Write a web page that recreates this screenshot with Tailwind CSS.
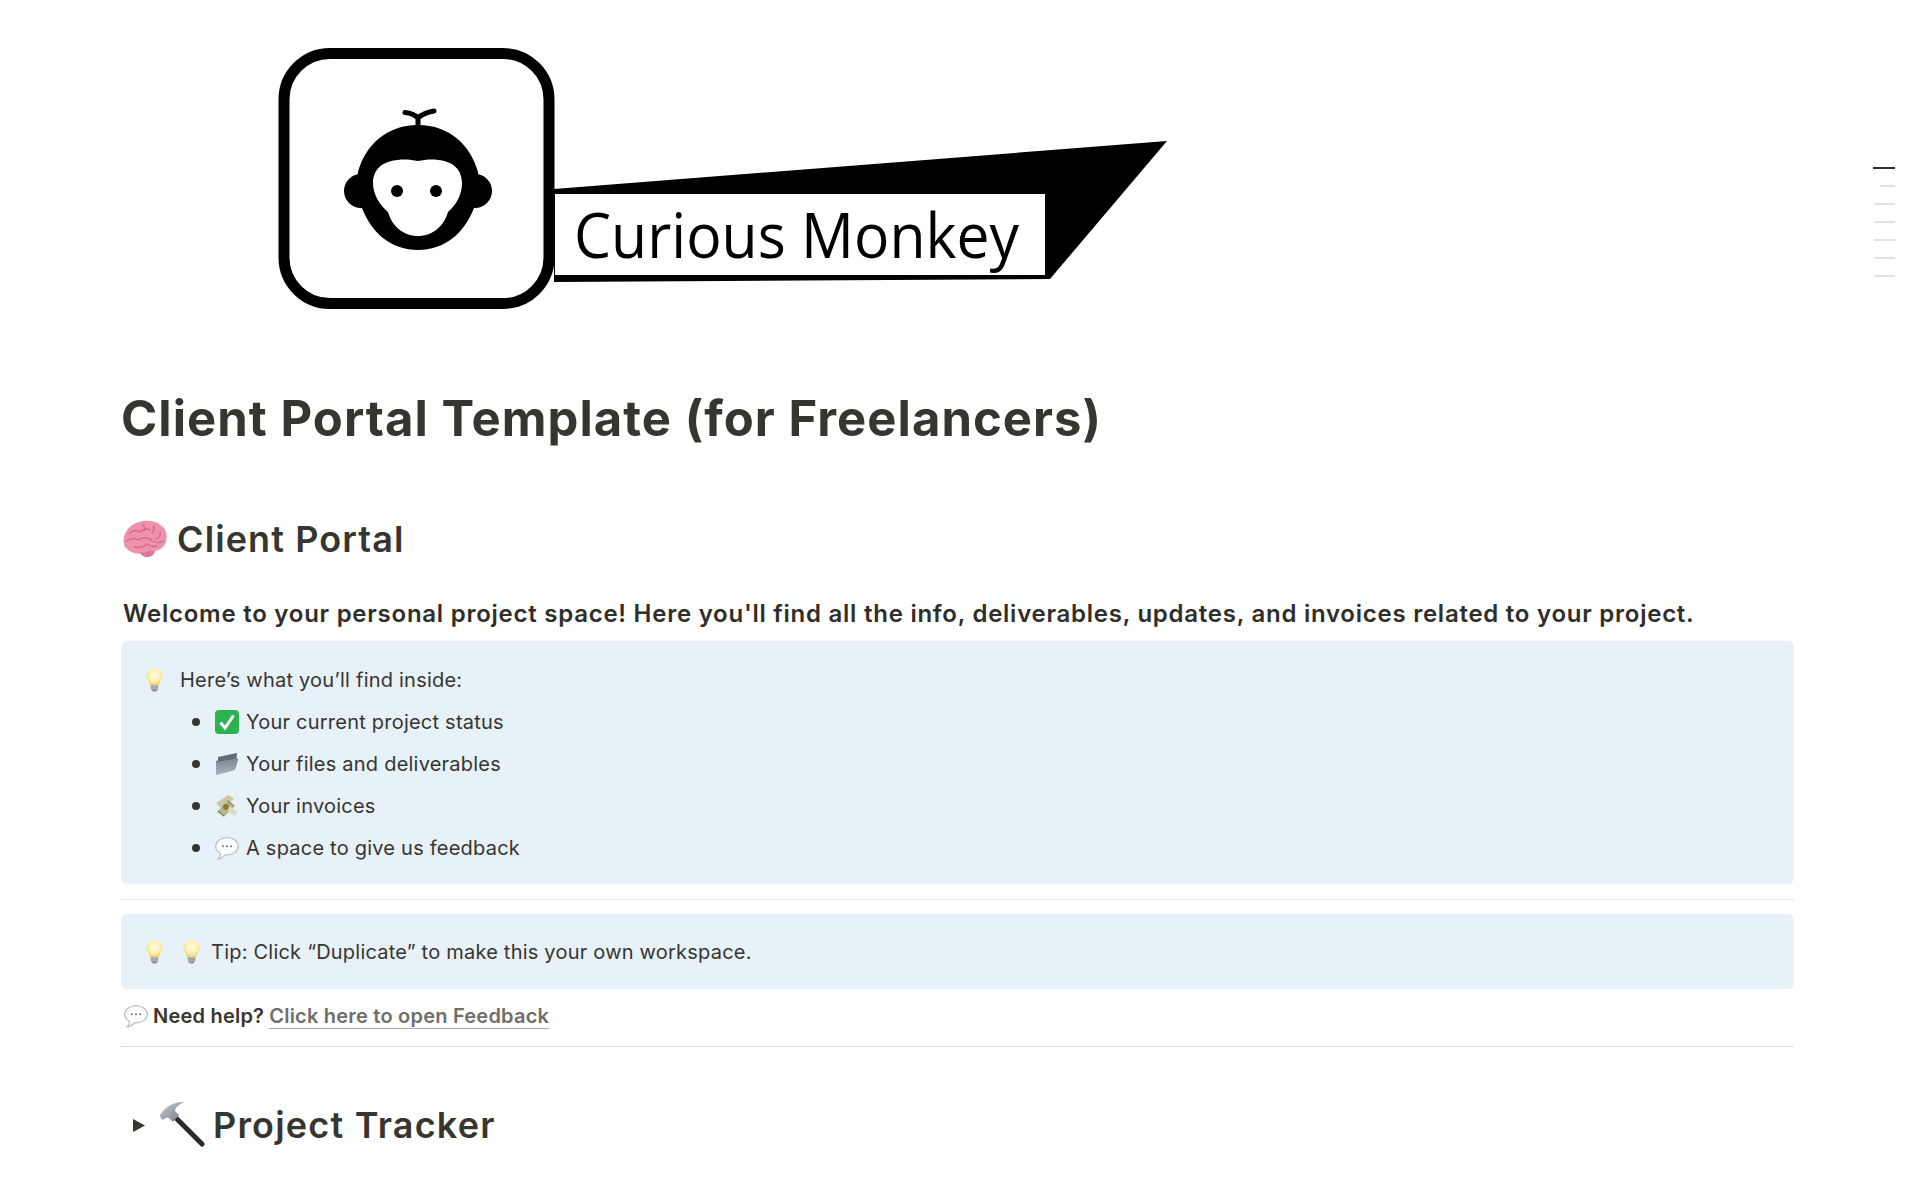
<!DOCTYPE html>
<html lang="en">

<head>
    <meta charset="UTF-8">
    <meta name="viewport" content="width=device-width, initial-scale=1.0">
    <title>Client Portal Template (for Freelancers)</title>
    <script src="https://cdn.jsdelivr.net/npm/@tailwindcss/browser@4"></script>
</head>

<body class="relative h-[1199px] overflow-hidden bg-white font-[Inter,sans-serif] text-[#37352f]">
    <!-- shared emoji drawings -->
    <svg class="absolute w-0 h-0" aria-hidden="true">
        <defs>
            <radialGradient id="bulbglow" cx="50%" cy="38%" r="60%">
                <stop offset="0%" stop-color="#fffde8" />
                <stop offset="65%" stop-color="#fbf0a4" />
                <stop offset="100%" stop-color="#e9cf6c" />
            </radialGradient>
            <linearGradient id="steel" x1="0" y1="0" x2="1" y2="1">
                <stop offset="0%" stop-color="#c9ced6" />
                <stop offset="100%" stop-color="#6f7680" />
            </linearGradient>
            <linearGradient id="foldergrad" x1="0" y1="0" x2="0" y2="1">
                <stop offset="0%" stop-color="#7d8894" />
                <stop offset="100%" stop-color="#a9b3bd" />
            </linearGradient>
            <symbol id="bulb" viewBox="0 0 17 24">
                <path d="M8.5 0.5C3.8 0.5 0.5 3.9 0.5 8c0 3.6 3 5.8 3.6 9.5h8.8c.6-3.7 3.6-5.9 3.6-9.5 0-4.1-3.3-7.500-8-7.500z" fill="url(#bulbglow)" />
                <path d="M4.600 17.500h7.800l-.4 3.500-1.800 2.500H6.800L5 21z" fill="#8b8d90" />
                <path d="M5 19.300l7-.5M5.300 21l6.400-.5" stroke="#cfd2d5" stroke-width=".7" />
            </symbol>
            <symbol id="bubble" viewBox="0 0 24 23">
                <path d="M12 .7C5.700.7.700 4.400.700 9.200c0 3 1.900 5.500 4.800 7-.2 2-1 3.900-2.300 5.600 2.900-.4 5.300-1.600 7-4 .6.100 1.200.100 1.800.100 6.300 0 11.300-3.900 11.300-8.700S18.300.7 12 .7z" fill="#fbfcfd" stroke="#b9bec4" stroke-width="1.200" />
                <circle cx="8" cy="9.300" r="1" fill="#6d7176" />
                <circle cx="12" cy="9.300" r="1" fill="#6d7176" />
                <circle cx="16" cy="9.300" r="1" fill="#6d7176" />
            </symbol>
        </defs>
    </svg>

    <main class="pl-[121px] pr-[126px]">
        <!-- logo -->
        <svg class="block ml-[157px] pt-[42px] box-content w-[900px] h-[275px]" viewBox="278 40 900 275" xmlns="http://www.w3.org/2000/svg">
            <path d="M554 187L1167 139L1050 277L554 280Z" fill="#000" />
            <rect x="555" y="192" width="490" height="81" fill="#fff" />
            <rect x="284" y="51.500" width="265" height="250" rx="46" ry="46" fill="#fff" stroke="#000" stroke-width="11" />
            <text x="574" y="256" font-family="Open Sans" font-weight="500" font-size="62" textLength="445" lengthAdjust="spacingAndGlyphs" fill="#000">Curious Monkey</text>
            <g transform="translate(0 -2)">
                <path d="M418 126V118M418 118C414 114 410 113 405 112.500M418 118C422 114 428 112 434 111" fill="none" stroke="#000" stroke-width="5" stroke-linecap="round" />
                <circle cx="361" cy="191" r="17" fill="#000" />
                <circle cx="475" cy="191" r="17" fill="#000" />
                <path d="M418 125C386 125 365 146 358 172C356 185 358 198 362 208C372 234 392 250 418 250C444 250 464 234 474 208C478 198 480 185 478 172C471 146 450 125 418 125Z" fill="#000" />
                <path d="M418 161C412 160 405 159 398 160C382 161 373 170 373 183C373 195 380 205 388 212C392 226 403 236 418 236C433 236 444 226 448 212C456 205 462 195 462 183C462 170 453 161 438 160C431 159 424 160 418 161Z" fill="#fff" />
                <circle cx="397" cy="191" r="6" fill="#000" />
                <circle cx="436" cy="191" r="6" fill="#000" />
            </g>
        </svg>

        <h1 class="mt-[65px] h-[72px] flex items-center text-[49px] font-bold leading-none tracking-[1.05px] whitespace-nowrap">Client Portal Template (for Freelancers)</h1>

        <h2 class="mt-[60px] h-[50px] flex items-center gap-[10px] pl-[2px] text-[36px] font-semibold leading-none tracking-[1.1px]">
            <svg class="w-[44px] h-[38px]" viewBox="0 0 44 38">
                <path d="M25 37c-3 .6-6-1-7-3.500-5 .5-9-.5-12-3C2 28 0 24 .5 20 1 15 3 10 8 6c5-4 12-6 19-5 8 1 14 5 16 11 1.500 5 .5 11-3 15-2 2-5 3.500-8 4-1 3-3 5.500-7 6z" fill="#ee93ad" />
                <path d="M4 21c4-3 9-3 12-1 3-3 9-3 12 0M7 13c3-3 7-3 10-1 2-3 7-4 10-2M20 5c2 2 2 4 1 6M31 6c1 3 0 5-2 7M37 12c1 3-1 6-4 7M28 20c3 3 8 3 12 1M11 27c5 1 10 0 13-3 3 2 7 3 10 2M18 33c3 1 7 0 9-2" fill="none" stroke="#d9678c" stroke-width="1.400" stroke-linecap="round" />
                <path d="M25 37c-3 .6-6-1-7-3.500 3 .5 8 0 11-2.500l3 .5c-1 3-3 5-7 5.500z" fill="#d9789a" />
            </svg>
            Client Portal
        </h2>

        <p class="mt-[35px] h-[30px] flex items-center pl-[2px] text-[24px] font-semibold leading-none tracking-[0.75px] whitespace-nowrap text-[#2f2e2a]">Welcome to your personal project space! Here you'll find all the info, deliverables, updates, and invoices related to your project.</p>

        <section class="mt-[12px] h-[243px] rounded-md bg-[#e7f1f8] pl-[25px] pt-[26px] text-[20px] leading-[26px] tracking-[0.22px]">
            <div class="flex items-center h-[26px]">
                <svg class="w-[17px] h-[24px]"><use href="#bulb" /></svg>
                <span class="ml-[17px]">Here’s what you’ll find inside:</span>
            </div>
            <ul class="mt-[15.500px] ml-[46px] flex flex-col gap-[16.300px]">
                <li class="flex items-center h-[26px]">
                    <span class="w-[8px] h-[8px] rounded-full bg-[#37352f]"></span>
                    <svg class="ml-[15px] w-[24px] h-[24px]" viewBox="0 0 24 24">
                        <rect width="24" height="24" rx="4" fill="#2cb34f" />
                        <path d="M5.500 12.500l4.500 5.500 8.500-12.500" fill="none" stroke="#fff" stroke-width="3" />
                    </svg>
                    <span class="ml-[7px]">Your current project status</span>
                </li>
                <li class="flex items-center h-[26px]">
                    <span class="w-[8px] h-[8px] rounded-full bg-[#37352f]"></span>
                    <svg class="ml-[15px] w-[24px] h-[24px]" viewBox="0 0 24 24">
                        <path d="M1 9l2-.5V5l19-4-1 14-18 7z" fill="#5f6b78" />
                        <path d="M1 10l21-3.500c1 0 1.500.5 1 1.500l-3 10-18 5c-1 0-1.500-.5-1-1.500z" fill="url(#foldergrad)" />
                    </svg>
                    <span class="ml-[7px]">Your files and deliverables</span>
                </li>
                <li class="flex items-center h-[26px]">
                    <span class="w-[8px] h-[8px] rounded-full bg-[#37352f]"></span>
                    <svg class="ml-[15px] w-[24px] h-[24px]" viewBox="0 0 24 24">
                        <path d="M1 9L14 1l5 4L6 14z" fill="#c9c7a0" />
                        <path d="M2 18L13 6l7 6L9 23z" fill="#b9b58a" />
                        <path d="M14 12l9 6-4 4-8-7z" fill="#dcdcc4" />
                        <circle cx="11" cy="13" r="3" fill="#8d7a2e" />
                        <path d="M3 17l6 5M13 7l6 5" stroke="#6f7150" stroke-width="1" />
                    </svg>
                    <span class="ml-[7px]">Your invoices</span>
                </li>
                <li class="flex items-center h-[26px]">
                    <span class="w-[8px] h-[8px] rounded-full bg-[#37352f]"></span>
                    <svg class="ml-[15px] w-[24px] h-[23px]"><use href="#bubble" /></svg>
                    <span class="ml-[7px]">A space to give us feedback</span>
                </li>
            </ul>
        </section>

        <hr class="mt-[15px] border-0 border-t border-[#e3e2e0]" />

        <section class="mt-[14px] h-[75px] rounded-md bg-[#e7f1f8] pl-[25px] flex items-center text-[20px] leading-[26px] tracking-[0.22px]">
            <svg class="w-[17px] h-[24px]"><use href="#bulb" /></svg>
            <svg class="ml-[20px] w-[17px] h-[24px]"><use href="#bulb" /></svg>
            <span class="ml-[11px]">Tip: Click “Duplicate” to make this your own workspace.</span>
        </section>

        <p class="mt-[14px] h-[26px] flex items-center pl-[3px] text-[20px] leading-[26px] tracking-[0.22px]">
            <svg class="w-[24px] h-[23px]"><use href="#bubble" /></svg>
            <strong class="ml-[5px] font-semibold">Need help?</strong>
            <a href="#" class="ml-[5px] font-semibold text-[#6f6e69] border-b border-[#aaa9a5] leading-[24px]">Click here to open Feedback</a>
        </p>

        <hr class="mt-[17px] border-0 border-t border-[#dcdbd9]" />

        <h2 class="mt-[53px] h-[50px] flex items-center text-[36px] font-semibold leading-none tracking-[1.2px]">
            <svg class="ml-[12px] w-[12px] h-[13px]" viewBox="0 0 12 13"><path d="M0 0l12 6.500L0 13z" fill="#37352f" /></svg>
            <svg class="ml-[14px] w-[46px] h-[46px]" viewBox="0 0 46 46">
                <path d="M17 16L43 42" stroke="#2b2b2b" stroke-width="5" stroke-linecap="round" />
                <path d="M1 13c4-7 12-13 24-13-6 3-9 6-9 9l4 4-6 7-4-4c-2-1-4 0-6 2-2-1-3-3-3-5z" fill="url(#steel)" />
            </svg>
            <span class="ml-[8px]">Project Tracker</span>
        </h2>
    </main>

    <!-- page outline on the right edge -->
    <nav class="absolute top-[167px] right-[25px] w-[22px] flex flex-col items-end gap-[16px]">
        <span class="block w-[22px] h-[2px] bg-[#2f2e2a]"></span>
        <span class="block w-[15px] h-[2px] bg-[#e3e2e0]"></span>
        <span class="block w-[21px] h-[2px] bg-[#e3e2e0]"></span>
        <span class="block w-[21px] h-[2px] bg-[#e3e2e0]"></span>
        <span class="block w-[21px] h-[2px] bg-[#e3e2e0]"></span>
        <span class="block w-[21px] h-[2px] bg-[#e3e2e0]"></span>
        <span class="block w-[21px] h-[2px] bg-[#e3e2e0]"></span>
    </nav>
</body>

</html>
